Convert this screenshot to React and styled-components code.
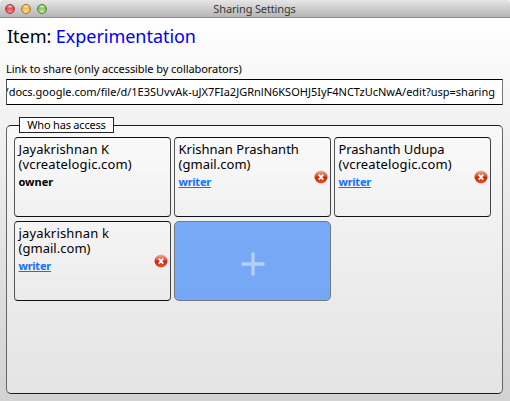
import React from "react";
import styled, { createGlobalStyle } from "styled-components";

const Global = createGlobalStyle`
  * { box-sizing: border-box; }
  body { margin: 0; overflow: hidden; }
`;

const Window = styled.div`
  width: 510px;
  height: 401px;
  display: flex;
  flex-direction: column;
  overflow: hidden;
  color: #000;
  font-family: "Noto Sans", "Open Sans", sans-serif;
  background: linear-gradient(#fff 18px, #f1f1f1 130px, #d2d2d2 401px);
`;

const TitleBar = styled.header`
  height: 18px;
  flex: none;
  display: grid;
  grid-template-columns: 60px 1fr 61px;
  align-items: center;
  border-bottom: 1px solid #8b8b8b;
  border-radius: 3px 3px 0 0;
  background: linear-gradient(#e6e6e6, #b5b5b5);
`;

const Lights = styled.div`
  display: flex;
  gap: 6px;
  padding-left: 5px;
`;

const Light = styled.span`
  width: 10px;
  height: 10px;
  border-radius: 50%;
  border: 1px solid ${(p) => p.$edge};
  background: radial-gradient(ellipse 4px 2px at 50% 18%, #fffc, #fff0),
    radial-gradient(circle at 50% 85%, ${(p) => p.$glow}, ${(p) => p.$tone} 70%);
`;

const Title = styled.div`
  text-align: center;
  font-size: 11px;
  line-height: 16px;
  letter-spacing: -0.15px;
  color: #383838;
`;

const Content = styled.main`
  flex: 1;
  display: flex;
  flex-direction: column;
  padding: 6px 7px 7px 6px;
`;

const Heading = styled.h1`
  margin: 0;
  padding-left: 1px;
  height: 24px;
  font-size: 18px;
  line-height: 24px;
  font-weight: 400;
  letter-spacing: -0.04px;
  white-space: nowrap;
`;

const ItemName = styled.span`
  color: #0000f5;
`;

const Label = styled.label`
  margin-top: 13px;
  height: 16px;
  font-size: 11px;
  line-height: 16px;
  letter-spacing: -0.065px;
  white-space: nowrap;
`;

const LinkBox = styled.div`
  margin-top: 2px;
  height: 26px;
  display: flex;
  justify-content: flex-end;
  align-items: center;
  overflow: hidden;
  padding-right: 7px;
  border: 1px solid #000;
  border-left-color: #555;
  border-right-color: #777;
  background: #fff;
  font-size: 11px;
  line-height: 16px;
  white-space: nowrap;
`;

const Group = styled.section`
  flex: 1;
  margin-top: 20px;
  border: 1px solid #1c1c1c;
  border-left-color: #666;
  border-right-color: #666;
  border-radius: 5px;
  background: linear-gradient(#f8f8f8, #e4e4e4);
`;

const Legend = styled.div`
  width: 95px;
  height: 16px;
  margin: -9px 0 4px 12px;
  border: 1px solid #222;
  background: #fff;
  font-size: 11px;
  line-height: 14px;
  letter-spacing: -0.2px;
  text-align: center;
  white-space: nowrap;
`;

const Cards = styled.div`
  display: grid;
  grid-template-columns: repeat(3, 157px);
  grid-auto-rows: 80px;
  gap: 4px 3px;
  padding-left: 7px;
`;

const Card = styled.article`
  position: relative;
  padding: 4px 3px 4px 3.5px;
  border: 1px solid #111;
  border-left-color: #555;
  border-right-color: #444;
  border-radius: 4px;
  background: linear-gradient(#fff4, #fff0);
  font-size: 13px;
  line-height: 15px;
  white-space: nowrap;
`;

const Person = styled.div`
  letter-spacing: ${(p) => p.$track}px;
`;

const Role = styled.div`
  width: max-content;
  margin-top: 2px;
  font-size: 11px;
  line-height: 15px;
  font-weight: 700;
  letter-spacing: ${(p) => (p.$link ? "-0.25px" : "-0.03px")};
  color: ${(p) => (p.$link ? "#146eff" : "#000")};
  text-decoration: ${(p) => (p.$link ? "underline" : "none")};
  text-underline-offset: 1px;
`;

const Remove = styled.button`
  position: absolute;
  right: 2px;
  top: 32px;
  width: 14px;
  height: 14px;
  padding: 0;
  border: 0;
  background: none;
  svg { display: block; }
`;

const AddCard = styled.button`
  display: flex;
  align-items: center;
  justify-content: center;
  padding: 6px 0 0;
  border: 1px solid #73777e;
  border-radius: 5px;
  background: linear-gradient(#79aaf7, #76a7f5);
`;

const people = [
  { name: "Jayakrishnan K", domain: "(vcreatelogic.com)", role: "owner", track: 0.08, domainTrack: 0.13 },
  { name: "Krishnan Prashanth", domain: "(gmail.com)", role: "writer", track: 0, domainTrack: 0.03 },
  { name: "Prashanth Udupa", domain: "(vcreatelogic.com)", role: "writer", track: -0.06, domainTrack: 0.13 },
  { name: "jayakrishnan k", domain: "(gmail.com)", role: "writer", track: 0.17, domainTrack: 0.03 },
];

function RemoveIcon() {
  return (
    <svg width="14" height="14" viewBox="0 0 14 14">
      <defs>
        <linearGradient id="removeFill" x1="0" y1="0" x2="0" y2="1">
          <stop offset="0" stopColor="#f0b3a8" />
          <stop offset="0.4" stopColor="#dd5540" />
          <stop offset="0.55" stopColor="#d32108" />
          <stop offset="1" stopColor="#e85a2c" />
        </linearGradient>
      </defs>
      <circle cx="7" cy="7" r="6.5" fill="url(#removeFill)" />
      <path d="M4.8 4.6l4.4 5M9.2 4.6l-4.4 5" stroke="#fff" strokeWidth="1.8" />
    </svg>
  );
}

export default function App() {
  return (
    <Window>
      <Global />
      <TitleBar>
        <Lights>
          <Light $edge="#9b4543" $tone="#df3238" $glow="#ff9290" />
          <Light $edge="#a07735" $tone="#eba332" $glow="#ffe58b" />
          <Light $edge="#55843e" $tone="#69b548" $glow="#c7f49c" />
        </Lights>
        <Title>Sharing Settings</Title>
      </TitleBar>
      <Content>
        <Heading>
          Item: <ItemName>Experimentation</ItemName>
        </Heading>
        <Label>Link to share (only accessible by collaborators)</Label>
        <LinkBox>
          <span>
            /docs.google.com/file/d/1E3SUvvAk-uJX7FIa2JGRnlN6KSOHJ5IyF4NCTzUcNwA/edit?usp=sharing
          </span>
        </LinkBox>
        <Group>
          <Legend>Who has access</Legend>
          <Cards>
            {people.map((p) => (
              <Card key={p.name}>
                <Person $track={p.track}>{p.name}</Person>
                <Person $track={p.domainTrack}>{p.domain}</Person>
                <Role $link={p.role !== "owner"}>{p.role}</Role>
                {p.role !== "owner" && (
                  <Remove aria-label="Remove">
                    <RemoveIcon />
                  </Remove>
                )}
              </Card>
            ))}
            <AddCard aria-label="Add collaborator">
              <svg width="24" height="24" viewBox="0 0 24 24">
                <path d="M12 0.5v23M0.5 12h23" stroke="#b4d0fa" strokeWidth="3.4" />
              </svg>
            </AddCard>
          </Cards>
        </Group>
      </Content>
    </Window>
  );
}
